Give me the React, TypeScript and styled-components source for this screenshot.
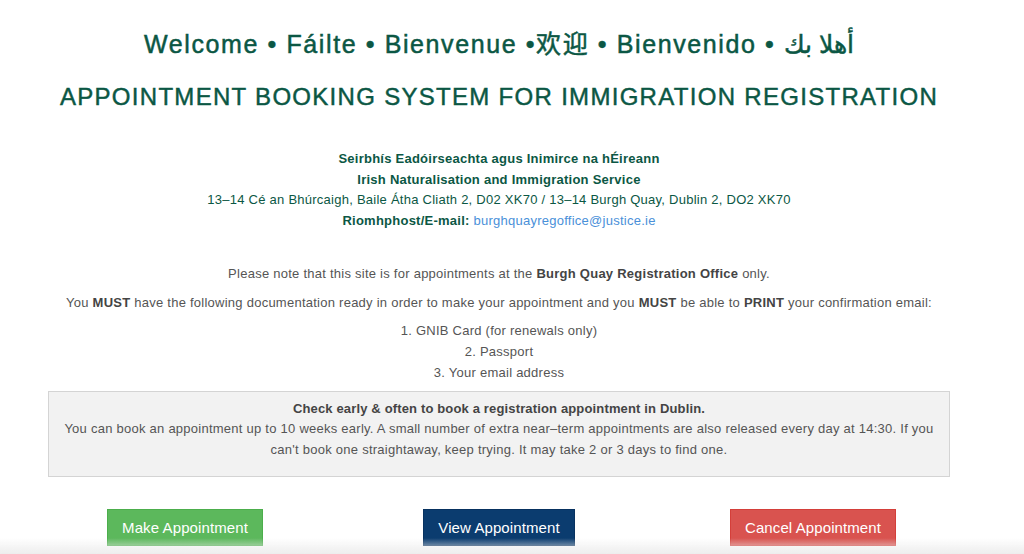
import React from 'react';
import styled, { createGlobalStyle } from 'styled-components';

const GlobalStyle = createGlobalStyle`
  body {
    margin: 0;
    background: #fff;
    font-family: 'Liberation Sans', Arial, 'Noto Sans CJK SC', sans-serif;
  }
`;

const Page = styled.main`
  width: 902px;
  margin-left: 48px;
  padding-top: 30px;
  text-align: center;
  letter-spacing: 0.25px;
`;

const Welcome = styled.h1`
  margin: 0 -40px;
  font-size: 25px;
  line-height: 29px;
  font-weight: 400;
  color: #0b5744;
  -webkit-text-stroke: 0.5px #0b5744;
  letter-spacing: 1.6px;
`;

const Title = styled.h2`
  margin: 23px -40px 0;
  font-size: 24px;
  line-height: 29px;
  font-weight: 400;
  color: #0b5744;
  -webkit-text-stroke: 0.45px #0b5744;
  letter-spacing: 1.3px;
`;

const Address = styled.address`
  margin-top: 38px;
  font-style: normal;
  font-size: 13px;
  line-height: 20.7px;
  color: #0b5744;
`;

const Strong = styled.strong`
  font-weight: 700;
`;

const Mail = styled.a`
  color: #4a90d9;
  text-decoration: none;
`;

const Note = styled.p<{ $gap: number }>`
  margin: ${(p) => p.$gap}px 0 0;
  font-size: 13px;
  line-height: 21px;
  color: #555;

  b {
    color: #444;
  }
`;

const List = styled.ol`
  list-style: none;
  margin: 7px 0 0;
  padding: 0;
  font-size: 13px;
  line-height: 21px;
  color: #555;
`;

const Notice = styled.section`
  margin-top: 8px;
  padding: 7px 14px 16px;
  background: #f2f2f2;
  border: 1px solid #d4d4d4;
  font-size: 13px;
  line-height: 20.5px;
  color: #555;
`;

const NoticeTitle = styled.div`
  font-weight: 700;
  color: #444;
  letter-spacing: 0.15px;
`;

const Actions = styled.div`
  display: grid;
  grid-template-columns: repeat(3, 314px);
  margin: 32px -20px 0;
  justify-items: center;
  letter-spacing: 0;
`;

const Button = styled.button<{ $bg: string; $border: string }>`
  height: 37px;
  padding: 0 14px;
  border: 1px solid ${(p) => p.$border};
  border-radius: 0;
  background: ${(p) => p.$bg};
  color: #fff;
  font-family: inherit;
  font-size: 15px;
  letter-spacing: 0.1px;
  cursor: pointer;
`;

const BottomShade = styled.div`
  position: fixed;
  left: 0;
  right: 0;
  bottom: 0;
  height: 16px;
  background: linear-gradient(to bottom, rgba(235, 235, 235, 0), rgba(235, 235, 235, 0.9));
  pointer-events: none;
`;

export default function App() {
  return (
    <>
      <GlobalStyle />
      <Page>
        <Welcome>
          Welcome • Fáilte • Bienvenue •欢迎 • Bienvenido • أهلا بك
        </Welcome>
        <Title>APPOINTMENT BOOKING SYSTEM FOR IMMIGRATION REGISTRATION</Title>

        <Address>
          <Strong>Seirbhís Eadóirseachta agus Inimirce na hÉireann</Strong>
          <br />
          <Strong>Irish Naturalisation and Immigration Service</Strong>
          <br />
          13–14 Cé an Bhúrcaigh, Baile Átha Cliath 2, D02 XK70 / 13–14 Burgh Quay, Dublin 2, DO2 XK70
          <br />
          <Strong>Riomhphost/E-mail:</Strong>{' '}
          <Mail href="mailto:burghquayregoffice@justice.ie">burghquayregoffice@justice.ie</Mail>
        </Address>

        <Note $gap={31}>
          Please note that this site is for appointments at the <b>Burgh Quay Registration Office</b> only.
        </Note>
        <Note $gap={8}>
          You <b>MUST</b> have the following documentation ready in order to make your appointment and you{' '}
          <b>MUST</b> be able to <b>PRINT</b> your confirmation email:
        </Note>

        <List>
          <li>1. GNIB Card (for renewals only)</li>
          <li>2. Passport</li>
          <li>3. Your email address</li>
        </List>

        <Notice>
          <NoticeTitle>Check early &amp; often to book a registration appointment in Dublin.</NoticeTitle>
          You can book an appointment up to 10 weeks early. A small number of extra near–term appointments are
          also released every day at 14:30. If you can't book one straightaway, keep trying. It may take 2 or 3
          days to find one.
        </Notice>

        <Actions>
          <Button $bg="#5cb85c" $border="#4cae4c">Make Appointment</Button>
          <Button $bg="#0b3c6f" $border="#083260">View Appointment</Button>
          <Button $bg="#d9534f" $border="#d43f3a">Cancel Appointment</Button>
        </Actions>
      </Page>
      <BottomShade />
    </>
  );
}
